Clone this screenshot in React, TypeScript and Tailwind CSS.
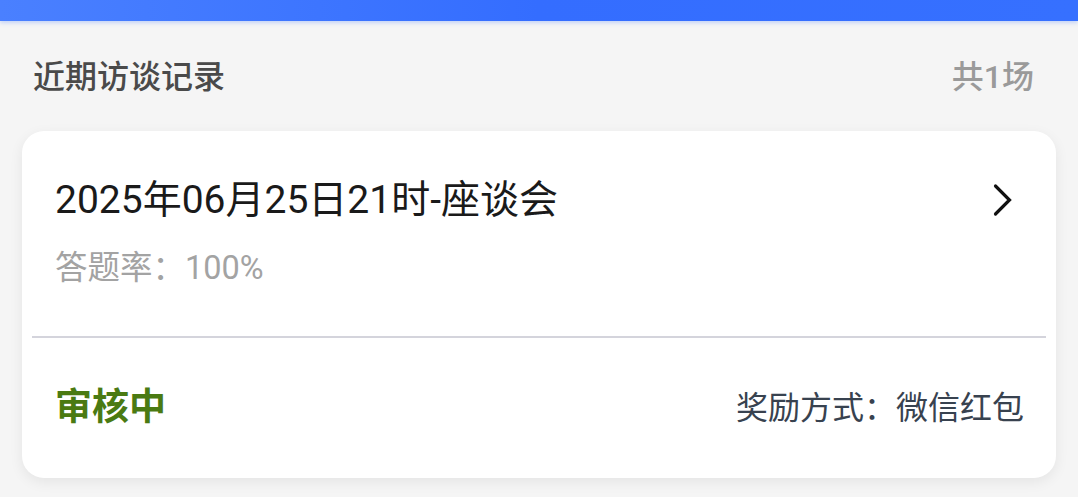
export default function App() {
  return (
    <div
      className="min-h-screen bg-[#f5f5f5] overflow-hidden"
      style={{ fontFamily: "Roboto, 'Noto Sans CJK SC', sans-serif" }}
    >
      <div className="h-[21px] bg-gradient-to-r from-[#4a80ff] via-[#346dff] to-[#3670ff] shadow-[0_2px_4px_rgba(51,112,255,0.25)]" />

      <div className="flex items-center justify-between px-[33px] pt-[34px]">
        <h2 className="text-[32px] leading-[44px] font-medium text-[#4a4a4a]">近期访谈记录</h2>
        <span className="text-[32px] leading-[44px] font-medium text-[#9a9a9a] mr-[11px]">共1场</span>
      </div>

      <div className="mx-[22px] mt-[32px] bg-white rounded-[22px] shadow-[0_4px_14px_rgba(0,0,0,0.07)]">
        <div className="pl-[33px] pr-[42px] pt-[45px] pb-[48px]">
          <div className="flex items-center justify-between">
            <h3 className="text-[39px] leading-[48px] text-[#1a1a1a]">2025年06月25日21时-座谈会</h3>
            <svg width="22" height="34" viewBox="0 0 22 34" fill="none" className="mr-[0px]">
              <polyline
                points="3.5,3 17.5,17 3.5,31"
                stroke="#111"
                strokeWidth="3.2"
                strokeLinecap="round"
                strokeLinejoin="miter"
              />
            </svg>
          </div>
          <p className="mt-[24px] text-[32.5px] leading-[40px] text-[#a3a3a3]">答题率：100%</p>
        </div>
        <div className="mx-[10px] h-[2px] bg-[#d4d4dc]" />
        <div className="flex items-center justify-between h-[140px] pl-[33px] pr-[32px]">
          <span className="text-[37px] font-bold text-[#4a7a12]">审核中</span>
          <span className="text-[32px] text-[#38424f]">奖励方式：微信红包</span>
        </div>
      </div>
    </div>
  );
}
